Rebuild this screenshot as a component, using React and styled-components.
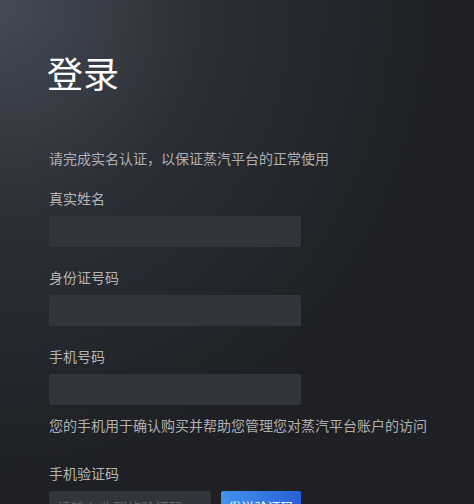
import React from "react";
import styled, { createGlobalStyle } from "styled-components";

const Global = createGlobalStyle`
  html, body { margin: 0; padding: 0; background: #1e2025; }
  * { box-sizing: border-box; }
  body { font-family: "Noto Sans CJK SC", "Noto Sans", sans-serif; }
`;

const Page = styled.div`
  min-height: 504px;
  padding: 54px 0 0 49px;
  background:
    radial-gradient(ellipse 520px 560px at 0% 0%, rgba(70, 77, 88, 0.95) 0%, rgba(48, 52, 61, 0.7) 40%, rgba(30, 32, 37, 0) 85%),
    #1e2025;
  overflow: hidden;
`;

const Title = styled.h1`
  margin: 0 0 58px -2px;
  font-size: 36px;
  line-height: 36px;
  font-weight: 400;
  color: #ffffff;
`;

const Text = styled.p`
  margin: 0 0 ${(p) => p.$mb ?? 20}px;
  font-size: 14px;
  line-height: 20px;
  color: #afafaf;
`;

const Field = styled.div`
  display: flex;
  flex-direction: column;
  gap: 8px;
  margin-bottom: ${(p) => p.$mb ?? 20}px;
`;

const Label = styled.label`
  font-size: 14px;
  line-height: 20px;
  color: #b4b4b4;
`;

const Input = styled.input`
  width: ${(p) => p.$w ?? 252}px;
  height: 31px;
  border: none;
  outline: none;
  border-radius: 2px;
  background: #32353c;
  color: #fff;
  padding: 0 8px;
  font-family: inherit;
  font-size: 14px;
  &::placeholder { color: #5f636b; }
`;

const Row = styled.div`
  display: flex;
  gap: 10px;
`;

const Button = styled.button`
  width: 80px;
  height: 31px;
  border: none;
  border-radius: 2px;
  background: linear-gradient(90deg, #3f94ee 0%, #2a5fd7 100%);
  color: #fff;
  font-family: inherit;
  font-size: 13px;
  padding: 0;
`;

export default function App() {
  return (
    <>
      <Global />
      <Page>
        <Title>登录</Title>
        <Text>请完成实名认证，以保证蒸汽平台的正常使用</Text>
        <Field>
          <Label>真实姓名</Label>
          <Input />
        </Field>
        <Field>
          <Label>身份证号码</Label>
          <Input />
        </Field>
        <Field $mb={10}>
          <Label>手机号码</Label>
          <Input />
        </Field>
        <Text $mb={28}>您的手机用于确认购买并帮助您管理您对蒸汽平台账户的访问</Text>
        <Field>
          <Label>手机验证码</Label>
          <Row>
            <Input $w={162} placeholder="请输入收到的验证码" />
            <Button>发送验证码</Button>
          </Row>
        </Field>
      </Page>
    </>
  );
}
